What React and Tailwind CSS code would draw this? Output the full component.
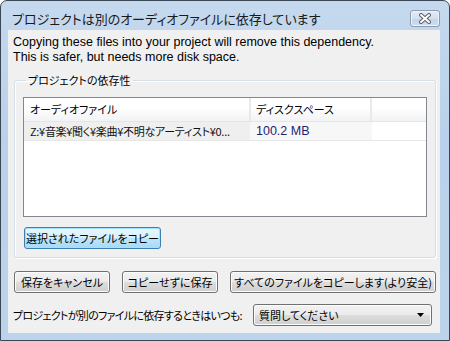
import React from 'react'

const jp = "font-['Noto_Sans_CJK_JP','Noto_Sans',sans-serif] [font-feature-settings:'palt']"

const Btn = ({ children, className = '', focused = false }) => (
    <div className={`h-[22px] rounded-[3px] border flex items-center justify-center ${focused ? 'border-[#3c7fb1] bg-[linear-gradient(#eaf6fd_0%,#d9f0fc_50%,#bee6fd_51%,#a7d9f5_100%)] shadow-[inset_0_0_0_1px_#9fe4ff]' : 'border-[#707070] bg-[linear-gradient(#f2f2f2_0%,#ebebeb_50%,#dddddd_51%,#cfcfcf_100%)] shadow-[inset_0_0_0_1px_#fcfcfc]'} ${className}`}>
        <span className={`${jp} text-[11px] leading-[14px] text-black whitespace-nowrap`}>{children}</span>
    </div>
)

const App = () => {
    return (
        <div className="w-[450px] h-[341px] border border-[#3b4654] rounded-t-[7px] bg-[linear-gradient(#c5d9ee,#b9d1ea_40%,#bcd3eb)] flex flex-col overflow-hidden">
            {/* title bar */}
            <div className="h-[29px] flex justify-between shrink-0">
                <div className={`${jp} text-[13px] leading-[16px] pl-[11px] pt-[10px] text-[#1a1a1a]`}>
                    プロジェクトは別のオーディオファイルに依存しています
                </div>
                <div className="mt-[9px] mr-[9px] w-[30px] h-[17px] rounded-[3px] border border-[#8a9cb3] bg-[linear-gradient(#e3ecf6,#d3e0ef_50%,#c4d5e9_51%,#cfdcec)] shadow-[inset_0_0_0_1px_#eef4fb] flex items-center justify-center">
                    <svg width="14" height="11" viewBox="0 0 14 11">
                        <path d="M3 2 L11 9 M11 2 L3 9" stroke="#59606b" strokeWidth="4" strokeLinecap="round" />
                        <path d="M3 2 L11 9 M11 2 L3 9" stroke="#ffffff" strokeWidth="2" strokeLinecap="round" />
                    </svg>
                </div>
            </div>

            {/* client */}
            <div className="ml-[7px] w-[432px] h-[303px] bg-[#f0f0f0] flex flex-col">
                <div className="pl-[5px] pt-[5px] font-['Liberation_Sans',sans-serif] text-[12.5px] leading-[15px] text-black">
                    <div>Copying these files into your project will remove this dependency.</div>
                    <div>This is safer, but needs more disk space.</div>
                </div>

                <fieldset className="ml-[6px] mt-[8px] w-[422px] h-[185px] border border-[#d5dfe5] rounded-[3px] px-[8px] shadow-[inset_1px_1px_0_#fff,1px_1px_0_#fff]">
                    <legend className={`${jp} ml-[3px] px-[2px] text-[11px] leading-[14px] text-black`}>プロジェクトの依存性</legend>
                    <div className="mt-[10px] w-[404px] h-[120px] border border-[#828790] bg-white flex flex-col">
                        <div className="h-[24px] flex border-b border-[#e4e5e7] bg-[linear-gradient(#ffffff_0%,#ffffff_40%,#f2f3f5_100%)]">
                            <div className={`${jp} w-[227px] pl-[6px] border-r-2 border-[#e8e9eb] flex items-center text-[11px] text-black`}>オーディオファイル</div>
                            <div className={`${jp} w-[121px] pl-[5px] border-r-2 border-[#e8e9eb] flex items-center text-[11px] text-black`}>ディスクスペース</div>
                            <div className="flex-1"></div>
                        </div>
                        <div className="h-[19px] flex border-b border-[#e6e6e6]">
                            <div className={`${jp} w-[226px] pl-[6px] bg-[#efefef] flex items-center text-[11px] tracking-[-0.3px] text-[#111] whitespace-nowrap overflow-hidden`}>Z:¥音楽¥聞く¥楽曲¥不明なアーティスト¥0...</div>
                            <div className="w-[122px] pl-[6px] bg-[#f7f7f7] flex items-center font-['Liberation_Sans',sans-serif] text-[12.5px] text-[#1e1e72]">100.2 MB</div>
                            <div className="flex-1"></div>
                        </div>
                    </div>
                    <Btn focused className="mt-[10px] ml-[1px] w-[137px]">選択されたファイルをコピー</Btn>
                </fieldset>

                <div className="mt-[13px] ml-[6px] flex gap-[12px]">
                    <Btn className="w-[96px]">保存をキャンセル</Btn>
                    <Btn className="w-[96px]">コピーせずに保存</Btn>
                    <Btn className="w-[206px]">すべてのファイルをコピーします(より安全)</Btn>
                </div>

                <div className="mt-[11px] ml-[5px] flex items-center">
                    <div className={`${jp} w-[240px] text-[11px] leading-[14px] tracking-[-0.7px] text-black whitespace-nowrap`}>プロジェクトが別のファイルに依存するときはいつも:</div>
                    <div className="w-[179px] h-[22px] rounded-[3px] border border-[#707070] bg-[linear-gradient(#f2f2f2_0%,#ebebeb_50%,#dddddd_51%,#cfcfcf_100%)] shadow-[inset_0_0_0_1px_#fcfcfc] flex items-center justify-between pl-[5px] pr-[7px]">
                        <span className={`${jp} text-[11px] leading-[14px] text-black`}>質問してください</span>
                        <svg width="7" height="4" viewBox="0 0 7 4"><path d="M0 0 H7 L3.5 4 Z" fill="#000" /></svg>
                    </div>
                </div>
            </div>
        </div>
    )
}

export default App
